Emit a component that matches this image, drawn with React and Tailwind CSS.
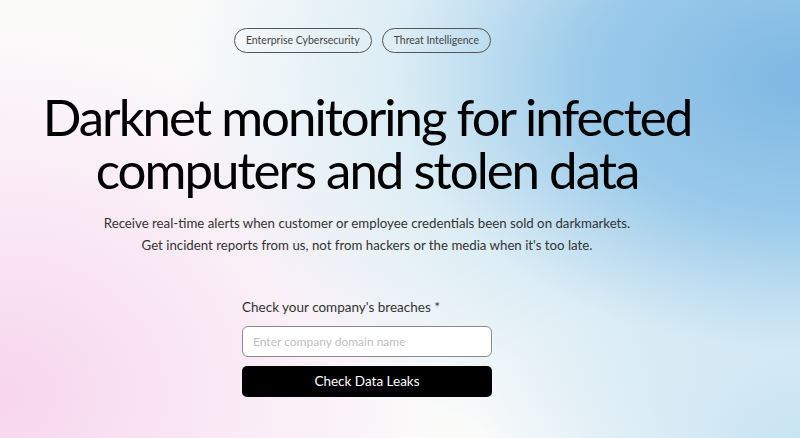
export default function App() {
  return (
    <div
      className="w-[800px] h-[438px] overflow-hidden bg-[#fbfbfa] bg-[radial-gradient(ellipse_78%_95%_at_100%_18%,#7fb8e3_0%,#9ccbea_35%,rgba(200,228,242,0.6)_65%,rgba(251,251,250,0)_100%),radial-gradient(ellipse_55%_85%_at_0%_90%,#f7d5ee_0%,rgba(249,226,243,0.8)_45%,rgba(251,251,250,0)_100%),radial-gradient(ellipse_40%_40%_at_100%_100%,#c8e4f3_0%,rgba(251,251,250,0)_100%)]"
      style={{ fontFamily: 'Lato, "Noto Sans", sans-serif' }}
    >
      <div className="w-[734px] flex flex-col items-center">
        <div className="mt-[28px] mr-[9px] flex gap-[10px]">
          <span className="h-[25px] px-[11px] flex items-center rounded-full border border-[#555] text-[10.5px] text-[#444]">
            Enterprise Cybersecurity
          </span>
          <span className="h-[25px] px-[11px] flex items-center rounded-full border border-[#555] text-[10.5px] text-[#444]">
            Threat Intelligence
          </span>
        </div>

        <h1 className="mt-[37px] text-center text-[51px] leading-[53px] font-normal tracking-[-2px] text-black">
          Darknet monitoring for infected
          <br />
          computers and stolen data
        </h1>

        <p className="mt-[16px] text-center text-[13.25px] leading-[22px] text-[#333]">
          Receive real-time alerts when customer or employee credentials been sold on darkmarkets.
          <br />
          Get incident reports from us, not from hackers or the media when it's too late.
        </p>

        <form className="mt-[42px] w-[250px] flex flex-col" onSubmit={(e) => e.preventDefault()}>
          <label className="text-[13.5px] leading-[18px] text-[#333]">Check your company's breaches *</label>
          <input
            type="text"
            placeholder="Enter company domain name"
            className="mt-[10px] h-[31px] w-full rounded-[6px] border border-[#8a8a8a] bg-white px-[10px] text-[12px] placeholder:text-[#c0c0c0] outline-none"
          />
          <button
            type="submit"
            className="mt-[9px] h-[31px] w-full rounded-[5px] bg-black text-white text-[13.5px]"
          >
            Check Data Leaks
          </button>
        </form>
      </div>
    </div>
  );
}
